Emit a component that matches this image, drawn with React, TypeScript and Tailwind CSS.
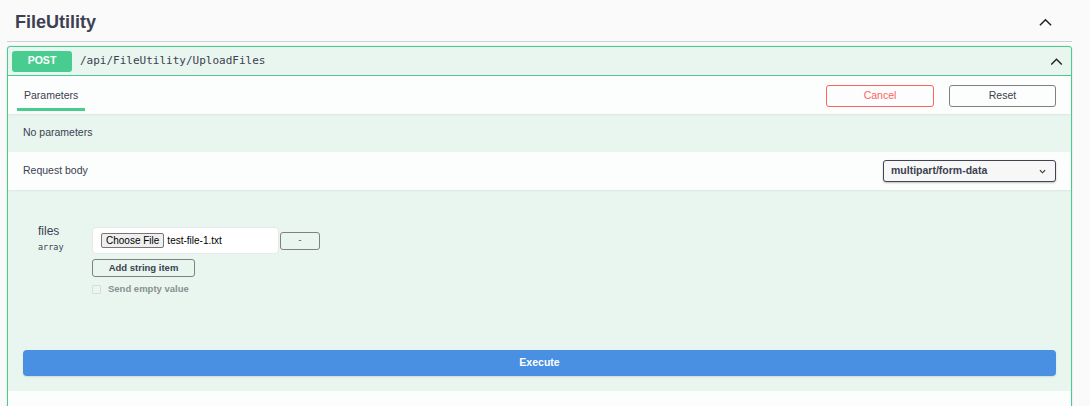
import React from "react";

const Chevron = ({ className }: { className?: string }) => (
  <svg className={className} viewBox="0 0 14 8" fill="none" stroke="currentColor" strokeWidth="1.6">
    <polyline points="1,7.5 7,1.5 13,7.5" />
  </svg>
);

export default function App() {
  return (
    <div className="w-[1090px] h-[406px] overflow-hidden bg-[#fafafa] text-[#3b4151]" style={{ fontFamily: '"Liberation Sans", Arial, sans-serif' }}>
      <div className="ml-[7px] w-[1065px]">
        <div className="h-[35px] mt-[7px] border-b border-[#cfd0d2] flex items-center justify-between pl-[8px] pr-[20px]">
          <span className="text-[18px] font-bold text-[#3b4151] -mt-[4px]">FileUtility</span>
          <Chevron className="w-[13px] h-[8px] text-[#222] -mt-[4px]" />
        </div>
        <div className="mt-[4px] border border-[#49cc90] rounded-[3px] bg-[#e8f6ef] shadow-[0_0_2px_rgba(0,0,0,0.15)]">
          <div className="h-[29px] flex items-center px-[4px] border-b border-[#49cc90]">
            <div className="w-[60px] h-[21px] rounded-[3px] bg-[#49cc90] text-white font-bold text-[10.5px] flex items-center justify-center">POST</div>
            <span className="ml-[8px] text-[11px] text-[#3b4151]" style={{ fontFamily: '"DejaVu Sans Mono", monospace' }}>/api/FileUtility/UploadFiles</span>
            <Chevron className="ml-auto mr-[4px] w-[13px] h-[7px] text-[#222] mt-[1px]" />
          </div>
          <div className="h-[38px] bg-[#fbfefc] flex items-center pl-[9px] pr-[15px] shadow-[0_1px_2px_rgba(0,0,0,0.06)]">
            <div className="h-full flex flex-col justify-center relative px-[7px]">
              <span className="text-[10.5px] text-[#3b4151] mt-[2px]">Parameters</span>
              <div className="absolute left-0 right-0 bottom-[3px] h-[3px] bg-[#49cc90]" />
            </div>
            <button className="ml-auto mt-[1px] w-[108px] h-[22px] border border-[#ff6060] rounded-[3px] text-[#ff6060] text-[10.5px] bg-transparent">Cancel</button>
            <button className="ml-[15px] mt-[1px] w-[107px] h-[22px] border border-[#808080] rounded-[3px] text-[#3b4151] text-[10.5px] bg-transparent">Reset</button>
          </div>
          <div className="h-[38px] flex items-center pl-[15px] text-[10.5px] text-[#3b4151]">No parameters</div>
          <div className="h-[38px] bg-[#fbfefc] flex items-center pl-[15px] pr-[15px] shadow-[0_1px_2px_rgba(0,0,0,0.06)]">
            <span className="text-[10.5px]">Request body</span>
            <div className="ml-auto w-[173px] h-[22px] border border-[#41444e] rounded-[3px] bg-[#f7f7f7] shadow-[0_1px_2px_rgba(0,0,0,0.25)] flex items-center pl-[7px] pr-[9px]">
              <span className="text-[10.5px] font-bold text-[#3b4151]">multipart/form-data</span>
              <svg className="ml-auto w-[7px] h-[5px]" viewBox="0 0 8 5" fill="none" stroke="#333" strokeWidth="1.3"><polyline points="1,1 4,4 7,1" /></svg>
            </div>
          </div>
          <div className="h-[201px] pt-[37px] px-[15px]">
            <div className="flex">
              <div className="w-[69px] pl-[15px] -mt-[3px]">
                <div className="text-[12px] leading-[14px] text-[#3b4151]">files</div>
                <div className="text-[8.5px] mt-[3px] text-[#3b4151]" style={{ fontFamily: '"DejaVu Sans Mono", monospace' }}>array</div>
              </div>
              <div>
                <div className="flex items-start">
                  <div className="w-[187px] h-[27px] bg-white border border-[#e8e8e8] rounded-[4px] flex items-center pl-[8px]">
                    <span className="h-[15px] px-[4px] bg-[#efefef] border border-[#767676] rounded-[2px] text-[10px] text-black flex items-center">Choose File</span>
                    <span className="ml-[3px] text-[10px] text-black">test-file-1.txt</span>
                  </div>
                  <button className="ml-[1px] mt-[5px] w-[40px] h-[18px] border border-[#808080] rounded-[3px] text-[9px] text-[#3b4151] bg-transparent">-</button>
                </div>
                <button className="mt-[5px] w-[103px] h-[18px] border border-[#808080] rounded-[3px] text-[9.5px] font-bold text-[#3b4151] bg-transparent">Add string item</button>
                <div className="flex items-center mt-[4px]">
                  <div className="w-[9px] h-[9px] border border-[#d8dcd9] rounded-[1px] bg-[#eef5f1]" />
                  <span className="ml-[7px] text-[9.5px] font-bold text-[#8a9090]">Send empty value</span>
                </div>
              </div>
            </div>
            <button className="mt-[54px] w-full h-[26px] rounded-[4px] bg-[#4990e2] text-white font-bold text-[10.5px] shadow-[0_1px_2px_rgba(0,0,0,0.1)]">Execute</button>
          </div>
          <div className="h-[30px] bg-[#fbfefc]" />
        </div>
      </div>
    </div>
  );
}
